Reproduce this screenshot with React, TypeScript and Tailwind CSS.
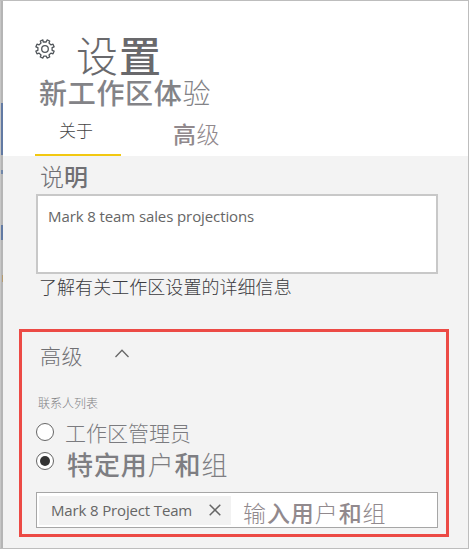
import type { ReactNode } from "react";

const cjk = "font-['Noto_Sans_CJK_SC',sans-serif] whitespace-nowrap";
const latin = "font-['Open_Sans','Noto_Sans',sans-serif] whitespace-nowrap";

function Heavy({ children }: { children: ReactNode }) {
  return <span className="font-medium">{children}</span>;
}

function GearIcon() {
  return (
    <svg className="mt-2 h-5 w-5 shrink-0" viewBox="0 0 20 20" fill="none" stroke="#50555a" strokeWidth="1.3" strokeLinejoin="round">
      <path d="M8.2 3 7.9.9 5.3 2l.7 2-1.9 1.9-2.1-.7L.9 7.8l2 .9v2.6l-2 .9L2 14.8l2.1-.7L6 16l-.7 2 2.6 1.1.9-2h2.4l.9 2 2.6-1.1-.7-2 1.9-1.9 2.1.7 1.1-2.6-2-.9V8.7l2-.9L18 5.2l-2.1.7L14 4l.7-2L12.1.9 11.2 3Z" />
      <circle cx="10" cy="10" r="3.3" />
    </svg>
  );
}

function Radio({ checked = false }: { checked?: boolean }) {
  return (
    <span className="flex h-[18px] w-[18px] shrink-0 items-center justify-center rounded-full border border-[#666] bg-white">
      {checked && <span className="h-[10px] w-[10px] rounded-full bg-[#333]" />}
    </span>
  );
}

export default function App() {
  return (
    <div className="flex h-[549px] w-[469px] overflow-hidden border-y border-r border-[#bdbdbd] bg-[#f3f3f3]">
      <aside className="flex h-full w-[3px] shrink-0 flex-col border-l border-[#c6c6c6] bg-[#b5b5b5]">
        <div className="mt-[102px] h-[52px] bg-[#627aa3]" />
        <div className="mt-[15px] h-1 bg-[#7187a8]" />
        <div className="mt-[51px] h-[15px] bg-[#627aa3]" />
        <div className="mt-[35px] ml-px h-[7px] bg-[#b59b70]" />
      </aside>
      <main className="w-[465px] shrink-0">
        <header className="h-[155px] bg-white pt-[30px]">
          <div className="flex h-[45px] items-start pl-8">
            <GearIcon />
            <h1 className={`${cjk} ml-[21px] text-[42px] leading-[45px] font-light tracking-[1px] text-[#69696c]`}>
              设<Heavy>置</Heavy>
            </h1>
          </div>
          <div className={`${cjk} h-[30px] pl-9 text-[28px] leading-[32px] font-light tracking-[0.7px] text-[#838387]`}>
            <Heavy>新工作区体</Heavy>验
          </div>
          <nav className="flex h-[50px] pl-8">
            <div className={`${cjk} h-[50px] w-[86px] border-b-2 border-[#f2c811] pl-6 text-[17px] leading-[47px] font-light text-[#444]`}>
              关于
            </div>
            <div className={`${cjk} ml-[52px] text-[23px] leading-[54px] font-light tracking-[0.5px] text-[#91898d]`}>
              <Heavy>高</Heavy>级
            </div>
          </nav>
        </header>
        <section className="flex flex-col pl-[33px]">
          <div className={`${cjk} h-[38px] pl-1 text-[24px] leading-[40px] font-light text-[#707074]`}>
            说<Heavy>明</Heavy>
          </div>
          <div className={`${latin} h-20 w-[402px] border-2 border-[#c8c8c8] bg-white px-[10px] text-[15px] leading-[41px] tracking-[-0.1px] text-[#666]`}>
            Mark 8 team sales projections
          </div>
          <div className={`${cjk} h-[55px] pl-[3px] text-[18px] leading-6 font-light tracking-[0.05px] text-[#3b3b3f]`}>
            了解有关工作区设置的详细信息
          </div>
        </section>
        <section className="ml-4 flex h-[208px] w-[430px] flex-col border-[3px] border-[#ec4a45] pl-[14px]">
          <div className="flex h-[46px] items-center pl-1">
            <span className={`${cjk} text-[21px] leading-[46px] font-light tracking-[0.5px] text-[#707073]`}>高级</span>
            <svg className="ml-8 h-[9px] w-[14px] shrink-0 -translate-y-0.5" viewBox="0 0 14 9" fill="none" stroke="#666" strokeWidth="1.3">
              <path d="m.5 8 6.5-6.7L13.5 8" />
            </svg>
          </div>
          <div className={`${cjk} mt-4 h-[18px] pl-[2px] text-[12px] leading-[18px] font-light text-[#808083]`}>联系人列表</div>
          <div className="mt-2 flex h-6 items-center">
            <Radio />
            <span className={`${cjk} ml-[11px] text-[21px] leading-6 font-light text-[#7b7b7f]`}>工作区管理员</span>
          </div>
          <div className="mt-[5px] flex h-8 items-start pt-[3px]">
            <Radio checked />
            <span className={`${cjk} ml-[13px] text-[26px] leading-[24px] font-light tracking-[0.9px] text-[#7e7e82]`}>
              <Heavy>特定用</Heavy>户<Heavy>和</Heavy>组
            </span>
          </div>
          <div className="mt-[11px] flex h-9 w-[402px] items-center border border-[#a6a6a6] bg-white pl-[2px]">
            <div className="flex h-[29px] w-[192px] items-center bg-[#f2f2f2] pl-3">
              <span className={`${latin} w-[158px] text-[15px] leading-[29px] tracking-[-0.15px] text-[#666]`}>Mark 8 Project Team</span>
              <svg className="h-3 w-3 shrink-0" viewBox="0 0 12 12" stroke="#666" strokeWidth="1.5">
                <path d="m.7.7 10.6 10.6M11.3.7.7 11.3" />
              </svg>
            </div>
            <span className={`${cjk} ml-3 text-[23px] leading-[34px] font-light tracking-[0.9px] text-[#91898d]`}>
              <span className="inline-block translate-y-0.5">输<Heavy>入用</Heavy>户<Heavy>和</Heavy>组</span>
            </span>
          </div>
        </section>
      </main>
    </div>
  );
}
